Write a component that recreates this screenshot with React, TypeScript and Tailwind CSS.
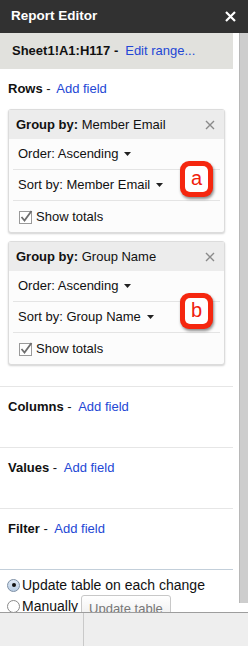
import React from 'react';

const Link: React.FC<{ children: React.ReactNode }> = ({ children }) => (
  <span className="text-[#2347d5]">{children}</span>
);

const Caret = () => (
  <svg width="7" height="4" viewBox="0 0 7 4" className="ml-[6px] inline-block">
    <path d="M0 0 L7 0 L3.5 4 Z" fill="#222" />
  </svg>
);

const Badge: React.FC<{ letter: string }> = ({ letter }) => (
  <div className="absolute right-[11px] top-[51px] w-[33px] h-[36px] rounded-[9px] bg-[#f5270f] p-[5px] shadow-[1px_2px_3px_rgba(0,0,0,0.45)]">
    <div className="w-full h-full rounded-[5px] bg-white flex items-center justify-center text-[#f0200c] text-[20px] leading-none pb-[2px]">
      {letter}
    </div>
  </div>
);

const GroupCard: React.FC<{ field: string; badge: string }> = ({ field, badge }) => (
  <div className="relative mx-[8px] border border-[#dcdcdc] rounded-[3px] bg-[#fcfcfc] shadow-[0_1px_2px_rgba(0,0,0,0.18)]">
    <div className="h-[29px] bg-[#ececec] flex items-center justify-between pl-[7px] pr-[9px]">
      <span>
        <b>Group by:</b> {field}
      </span>
      <svg width="10" height="10" viewBox="0 0 10 10">
        <path d="M1 1 L9 9 M9 1 L1 9" stroke="#8a8a8a" strokeWidth="1.4" />
      </svg>
    </div>
    <div className="px-[4px]">
      <div className="h-[31px] flex items-center pl-[5px] border-b border-[#e4e4e4]">
        Order: Ascending <Caret />
      </div>
      <div className="h-[31px] flex items-center pl-[5px] border-b border-[#e4e4e4]">
        Sort by: {field} <Caret />
      </div>
      <div className="h-[31px] flex items-center pl-[6px]">
        <svg width="14" height="14" viewBox="0 0 14 14" className="mr-[3px]">
          <rect x="0.5" y="1.5" width="12" height="12" fill="#fff" stroke="#9a9a9a" />
          <path d="M2.5 7 L5.5 10.5 L12.5 1" fill="none" stroke="#6f6f6f" strokeWidth="1.8" />
        </svg>
        Show totals
      </div>
    </div>
    <Badge letter={badge} />
  </div>
);

const Section: React.FC<{ label: string }> = ({ label }) => (
  <div className="h-[61px] border-t border-[#e6e6e6] pl-[8px] pt-[10px]">
    <b>{label}</b> - <span className="ml-[3px]"><Link>Add field</Link></span>
  </div>
);

export default function App() {
  return (
    <div className="w-[248px] h-[646px] flex flex-col bg-white text-[13px] text-[#111] overflow-hidden font-['Liberation_Sans',Arial,sans-serif]">
      {/* title bar */}
      <div className="h-[33px] shrink-0 bg-[#313131] flex items-center justify-between pl-[11px] pr-[12px] text-white">
        <span className="text-[13.5px] font-bold">Report Editor</span>
        <svg width="11" height="11" viewBox="0 0 11 11">
          <path d="M1 1 L10 10 M10 1 L1 10" stroke="#fff" strokeWidth="2.2" />
        </svg>
      </div>

      <div className="h-[579px] shrink-0 flex overflow-hidden">
        <div className="w-[233px] shrink-0">
          <div className="h-[36px] bg-[#e1e1dd] flex items-center pl-[12px]">
            <b>Sheet1!A1:H117 -</b>
            <span className="ml-[7px]"><Link>Edit range...</Link></span>
          </div>
          <div className="h-[40px] flex items-center pl-[8px]">
            <b>Rows</b>&nbsp;-&nbsp;<span className="ml-[2px]"><Link>Add field</Link></span>
          </div>
          <GroupCard field="Member Email" badge="a" />
          <div className="h-[8px]" />
          <GroupCard field="Group Name" badge="b" />
          <div className="h-[21px]" />
          <Section label="Columns" />
          <Section label="Values" />
          <Section label="Filter" />
          <div className="border-t border-[#c3cfda] pt-[7px] pl-[7px]">
            <div className="flex items-center h-[16px]">
              <span className="w-[13px] h-[13px] rounded-full border border-[#7d8fa5] bg-gradient-to-b from-[#dfe9f5] to-[#b9cde4] flex items-center justify-center mr-[2px]">
                <span className="w-[4px] h-[4px] rounded-full bg-[#111]" />
              </span>
              <span className="text-[14px]">Update table on each change</span>
            </div>
            <div className="flex items-center h-[20px] mt-[3px]">
              <span className="w-[13px] h-[13px] rounded-full border border-[#8a8a8a] bg-white mr-[2px]" />
              <span className="text-[14px]">Manually</span>
              <span className="ml-[3px] h-[22px] px-[7px] pt-[3px] border border-[#c8c8c8] rounded-[3px] bg-gradient-to-b from-white to-[#efefef] text-[#777] text-[13px]">
                Update table
              </span>
            </div>
          </div>
        </div>
        <div className="w-[6px] shrink-0" />
        <div className="w-[9px] h-[570px] shrink-0 bg-[#cdcdcd] border-l border-[#b8b8b8]" />
      </div>

      {/* bottom bar */}
      <div className="flex-1 flex bg-[#eeeeee] border-t border-[#9d9d9d]">
        <div className="w-[84px] border-r border-[#c9c9c9]" />
      </div>
    </div>
  );
}
